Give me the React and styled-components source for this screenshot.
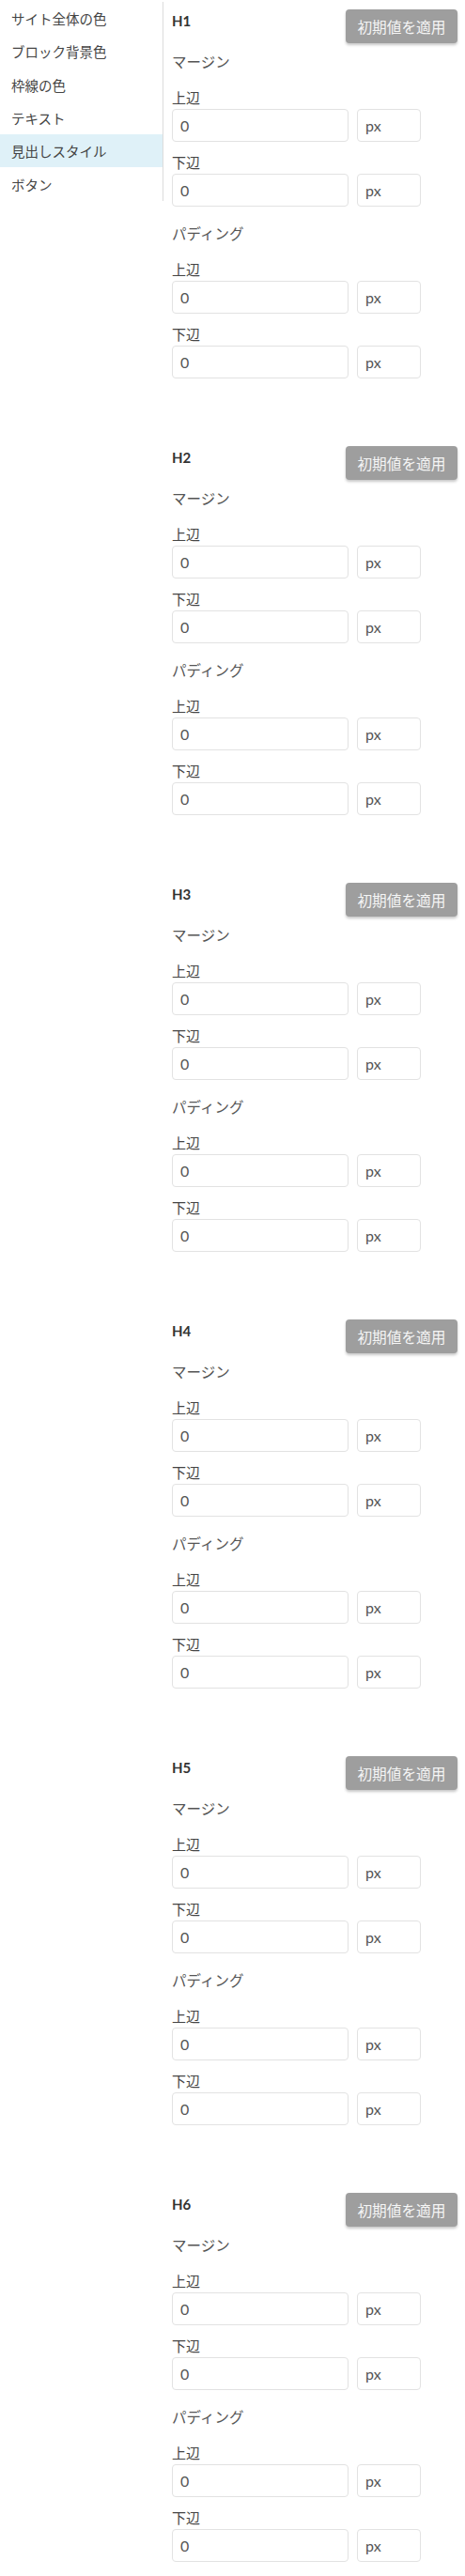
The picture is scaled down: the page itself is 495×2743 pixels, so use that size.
import React from "react";
import styled, { createGlobalStyle } from "styled-components";

const GlobalStyle = createGlobalStyle`
	body {
		margin: 0;
		background: #fff;
		font-family: Lato, "Noto Sans CJK JP", sans-serif;
		color: #444;
	}
`;

const Layout = styled.div`
	display: flex;
	flex-direction: row;
	align-items: flex-start;
	width: 495px;
`;

const Sidebar = styled.ul`
	list-style: none;
	margin: 2px 0 0;
	padding: 0;
	width: 173px;
	flex-shrink: 0;
	border-right: 1px solid #dcdcdc;
`;

const SideItem = styled.li`
	height: 35.3px;
	display: flex;
	align-items: center;
	padding: 0 12px;
	font-size: 14.5px;
	color: #444;
	background: ${(p) => (p.$active ? "#dff1f8" : "transparent")};
`;

const Content = styled.div`
	flex: 1;
	padding: 10px 8px 9px 9px;
`;

const Section = styled.section`
	display: flex;
	flex-direction: column;
	& + & {
		margin-top: 72px;
	}
`;

const Header = styled.div`
	display: flex;
	justify-content: space-between;
	align-items: flex-start;
	margin-bottom: 8px;
`;

const Title = styled.h2`
	margin: 0;
	font-size: 15px;
	line-height: 24px;
	font-weight: 700;
	color: #333;
`;

const ResetButton = styled.button`
	height: 36px;
	padding: 0 12.5px;
	border: none;
	border-radius: 4px;
	background: #9e9e9e;
	color: #f5f5f5;
	font-family: inherit;
	font-size: 15.7px;
	box-shadow: 0 2px 3px rgba(0, 0, 0, 0.22);
`;

const Group = styled.div`
	display: flex;
	flex-direction: column;
	& + & {
		margin-top: 17px;
	}
`;

const GroupTitle = styled.div`
	font-size: 15.5px;
	line-height: 24px;
	color: #555;
	margin-bottom: 14px;
`;

const Field = styled.div`
	display: flex;
	flex-direction: column;
	& + & {
		margin-top: 10px;
	}
`;

const Label = styled.label`
	font-size: 15px;
	line-height: 24px;
	color: #444;
`;

const InputRow = styled.div`
	display: flex;
	gap: 9px;
`;

const TextInput = styled.input`
	box-sizing: border-box;
	width: ${(p) => p.$width}px;
	height: 35px;
	padding: 0 8px;
	border: 1px solid #e2e2e2;
	border-radius: 4px;
	font-family: inherit;
	font-size: 16px;
	color: #555;
	background: #fff;
	outline: none;
`;

const menu = ["サイト全体の色", "ブロック背景色", "枠線の色", "テキスト", "見出しスタイル", "ボタン"];
const headings = ["H1", "H2", "H3", "H4", "H5", "H6"];

const SizeField = ({ label }) => (
	<Field>
		<Label>{label}</Label>
		<InputRow>
			<TextInput $width={188} defaultValue="0" />
			<TextInput $width={68} defaultValue="px" />
		</InputRow>
	</Field>
);

const SpacingGroup = ({ title }) => (
	<Group>
		<GroupTitle>{title}</GroupTitle>
		<SizeField label="上辺" />
		<SizeField label="下辺" />
	</Group>
);

export default function App() {
	return (
		<>
			<GlobalStyle />
			<Layout>
				<Sidebar>
					{menu.map((m) => (
						<SideItem key={m} $active={m === "見出しスタイル"}>
							{m}
						</SideItem>
					))}
				</Sidebar>
				<Content>
					{headings.map((h) => (
						<Section key={h}>
							<Header>
								<Title>{h}</Title>
								<ResetButton>初期値を適用</ResetButton>
							</Header>
							<SpacingGroup title="マージン" />
							<SpacingGroup title="パディング" />
						</Section>
					))}
				</Content>
			</Layout>
		</>
	);
}
